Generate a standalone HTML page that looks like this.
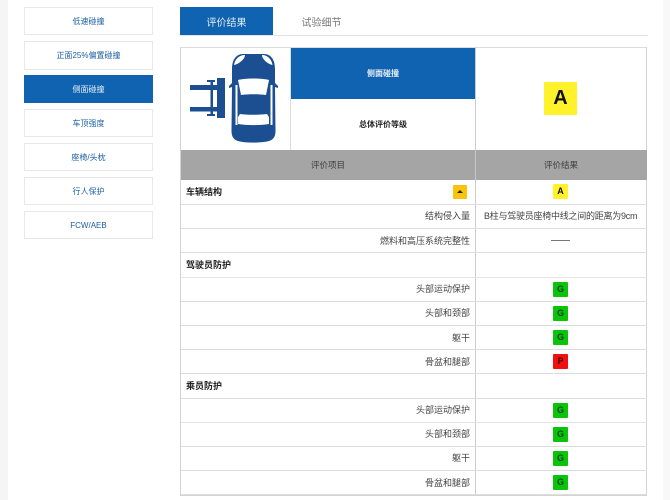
<!DOCTYPE html>
<html lang="zh"><head><meta charset="utf-8"><style>
html,body{margin:0;padding:0;background:#fff}
body{width:670px;height:500px;position:relative;overflow:hidden;font-family:"Liberation Sans","Noto Sans CJK SC",sans-serif;color:#333}
div{position:absolute;box-sizing:border-box}
.s{left:24px;width:129px;border:1px solid #e8e8e8;color:#1c5fa5;font-size:8px;text-align:center;display:flex;align-items:center;justify-content:center}
.h{background:#ddd;height:1px;left:181px;width:466px}
.t{font-size:9px;line-height:12px;white-space:nowrap}
.r{right:200px;text-align:right;color:#444}
.g{left:553px;width:15px;height:15px;border-radius:1px;background:#0ac40a;font:700 9px/15px "Liberation Sans",sans-serif;text-align:center;color:#042}
</style></head><body>
<div style="left:0;top:0;width:8px;height:500px;background:#f5f5f5"></div>
<div style="left:663px;top:0;width:7px;height:500px;background:#f8f8f8"></div>

<div class="s" style="top:7px;height:28px">低速碰撞</div>
<div class="s" style="top:41px;height:29px">正面25%偏置碰撞</div>
<div class="s" style="top:75px;height:28px;background:#1063b0;border-color:#1063b0;color:#e8f0f8">侧面碰撞</div>
<div class="s" style="top:109px;height:28px">车顶强度</div>
<div class="s" style="top:143px;height:28px">座椅/头枕</div>
<div class="s" style="top:177px;height:28px">行人保护</div>
<div class="s" style="top:211px;height:28px">FCW/AEB</div>

<div style="left:180px;top:7px;width:93px;height:29px;background:#1063b0;color:#e3edf6;font-size:10px;display:flex;align-items:center;justify-content:center">评价结果</div>
<div style="left:273px;top:7px;width:97px;height:29px;color:#777;font-size:10px;display:flex;align-items:center;justify-content:center">试验细节</div>
<div style="left:180px;top:35px;width:468px;height:1px;background:#e4e4e4"></div>

<div style="left:180px;top:47px;width:467px;height:449px;border:1px solid #d4d4d4;border-top-color:#ddd"></div>
<div style="left:290px;top:47px;width:1px;height:103px;background:#ddd"></div>
<div style="left:475px;top:47px;width:1px;height:449px;background:#ccc"></div>
<div style="left:291px;top:48px;width:184px;height:51px;background:#1063b0;color:#e8f0f8;font-size:8px;font-weight:700;display:flex;align-items:center;justify-content:center">侧面碰撞</div>
<div style="left:291px;top:99px;width:184px;height:51px;color:#222;font-size:8px;font-weight:700;display:flex;align-items:center;justify-content:center">总体评价等级</div>
<div style="left:544px;top:82px;width:33px;height:33px;background:#fff22a;color:#111;font:700 20px/33px 'Liberation Sans',sans-serif;text-align:center">A</div>

<svg style="position:absolute;left:185px;top:45px" width="105" height="105" viewBox="0 0 105 105">
<g fill="#1c4f92">
<rect x="5" y="40" width="28" height="5"/><rect x="5" y="62" width="28" height="4.500"/>
<rect x="25.500" y="35" width="2.500" height="36"/>
<rect x="22" y="35" width="8" height="2"/><rect x="22" y="69" width="8" height="2"/>
<rect x="32" y="33" width="8" height="40"/>
<path d="M58 9L79 9C86 9 90 15 90 24L90 38L93 41L93 43L90 42L90.500 86C90.500 92 88 95.500 82 96.500C74 98 62 98 55 96.500C49 95.500 46.500 92 46.500 86L47 42L44 43L44 41L47 38L47 24C47 15 51 9 58 9Z"/>
</g>
<g fill="#fff">
<path d="M49 20C50 14 54 10 60 10C60 14 54 19 49 20Z"/>
<path d="M87.500 20C86.500 14 82.500 10 77 10C77 14 82.500 19 87.500 20Z"/>
<path d="M53 35C60 33 77 33 84 35L81 50C74 49 63 49 56 50Z"/>
<path d="M55 69C63 70 74 70 82 69L84 72L84 79C74 80.500 63 80.500 53 79L53 72Z"/>
<rect x="50.500" y="40" width="2" height="40"/><rect x="85.500" y="40" width="2" height="40"/>
</g>
</svg>

<div style="left:181px;top:150px;width:466px;height:30px;background:#a5a5a5"></div>
<div style="left:475px;top:150px;width:1px;height:30px;background:#c8c8c8"></div>
<div class="t" style="left:181px;top:159px;width:294px;text-align:center;color:#3d3d3d;font-size:8.500px">评价项目</div>
<div class="t" style="left:476px;top:159px;width:170px;text-align:center;color:#3d3d3d;font-size:8.500px">评价结果</div>

<div class="h" style="top:204px"></div><div class="h" style="top:228px"></div><div class="h" style="top:252px"></div>
<div class="h" style="top:277px;background:#e4e4e4"></div><div class="h" style="top:301px"></div><div class="h" style="top:325px"></div>
<div class="h" style="top:349px"></div><div class="h" style="top:373px"></div><div class="h" style="top:398px"></div>
<div class="h" style="top:422px;background:#e4e4e4"></div><div class="h" style="top:446px"></div><div class="h" style="top:470px"></div><div class="h" style="top:494px"></div>

<div class="t" style="left:186px;top:186px;font-weight:700;color:#222">车辆结构</div>
<div style="left:453px;top:185px;width:14px;height:14px;background:#fac40a;border-radius:1px"></div>
<div style="left:457px;top:190px;width:0;height:0;border:3px solid transparent;border-top:0;border-bottom:3px solid #222"></div>
<div class="g" style="top:184px;background:#fff22a;color:#111">A</div>
<div class="t r" style="top:210px">结构侵入量</div>
<div class="t" style="left:484px;top:210px;color:#444;letter-spacing:-.25px">B柱与驾驶员座椅中线之间的距离为9cm</div>
<div class="t r" style="top:235px">燃料和高压系统完整性</div>
<div style="left:551px;top:240px;width:19px;height:1px;background:#777"></div>
<div class="t" style="left:186px;top:259px;font-weight:700;color:#222">驾驶员防护</div>

<div class="t r" style="top:283px">头部运动保护</div><div class="g" style="top:282px">G</div>
<div class="t r" style="top:307px">头部和颈部</div><div class="g" style="top:306px">G</div>
<div class="t r" style="top:332px">躯干</div><div class="g" style="top:330px">G</div>
<div class="t r" style="top:356px">骨盆和腿部</div><div class="g" style="top:354px;background:#f01010;color:#400">P</div>
<div class="t" style="left:186px;top:380px;font-weight:700;color:#222">乘员防护</div>
<div class="t r" style="top:404px">头部运动保护</div><div class="g" style="top:403px">G</div>
<div class="t r" style="top:428px">头部和颈部</div><div class="g" style="top:427px">G</div>
<div class="t r" style="top:452px">躯干</div><div class="g" style="top:451px">G</div>
<div class="t r" style="top:477px">骨盆和腿部</div><div class="g" style="top:475px">G</div>
</body></html>
